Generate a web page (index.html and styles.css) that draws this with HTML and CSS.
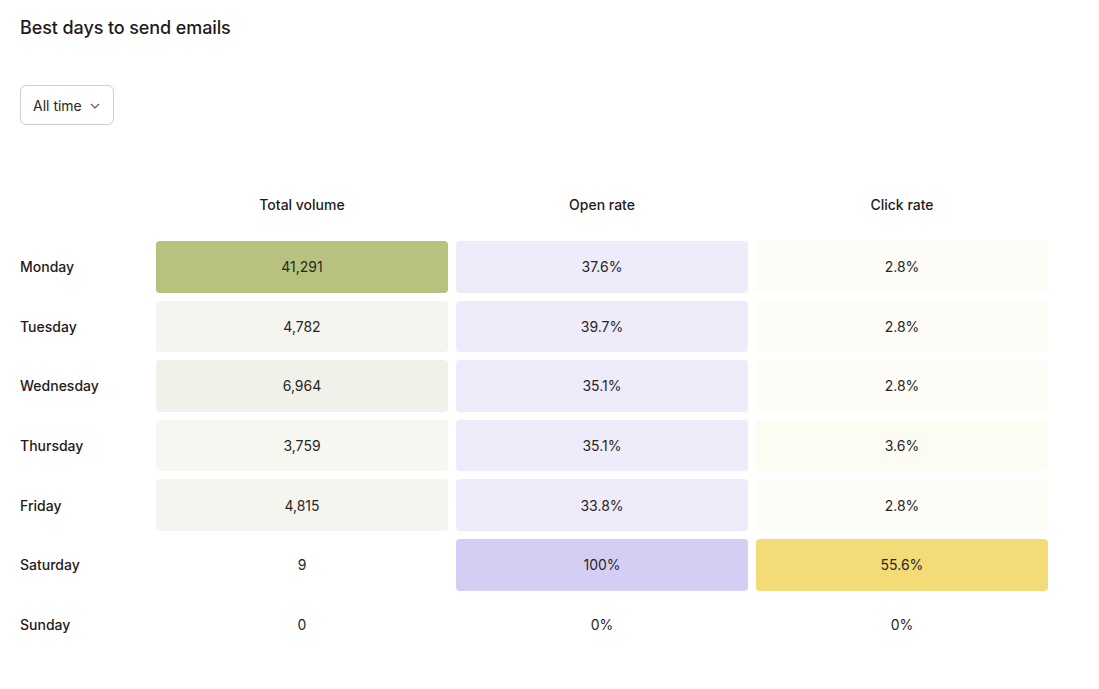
FILE: index.html
```html
<!DOCTYPE html>
<html>
<head>
<meta charset="utf-8">
<link rel="stylesheet" href="styles.css">
</head>
<body>
<div class="page">
  <h1 class="title">Best days to send emails</h1>
  <button class="select">All time
    <svg class="chev" width="10" height="6" viewBox="0 0 10 6"><path d="M1 1l4 4 4-4" fill="none" stroke="#555" stroke-width="1.1"/></svg>
  </button>
  <div class="grid">
    <div></div>
    <div class="head">Total volume</div>
    <div class="head">Open rate</div>
    <div class="head">Click rate</div>

    <div class="day">Monday</div>
    <div class="cell v-max">41,291</div>
    <div class="cell o-low">37.6%</div>
    <div class="cell c-low">2.8%</div>

    <div class="day">Tuesday</div>
    <div class="cell v-2">4,782</div>
    <div class="cell o-low">39.7%</div>
    <div class="cell c-low">2.8%</div>

    <div class="day">Wednesday</div>
    <div class="cell v-3">6,964</div>
    <div class="cell o-low">35.1%</div>
    <div class="cell c-low">2.8%</div>

    <div class="day">Thursday</div>
    <div class="cell v-1">3,759</div>
    <div class="cell o-low">35.1%</div>
    <div class="cell c-low2">3.6%</div>

    <div class="day">Friday</div>
    <div class="cell v-2">4,815</div>
    <div class="cell o-low">33.8%</div>
    <div class="cell c-low">2.8%</div>

    <div class="day">Saturday</div>
    <div class="cell">9</div>
    <div class="cell o-max">100%</div>
    <div class="cell c-max">55.6%</div>

    <div class="day">Sunday</div>
    <div class="cell">0</div>
    <div class="cell">0%</div>
    <div class="cell">0%</div>
  </div>
</div>
</body>
</html>
```
FILE: styles.css
```css
* { box-sizing: border-box; }
body {
  margin: 0;
  background: #fff;
  font-family: Inter, "Noto Sans", sans-serif;
  color: #1f1b1b;
}
.page {
  padding: 16px 20px 0 20px;
}
.title {
  margin: 0;
  font-size: 18px;
  line-height: 24px;
  font-weight: 500;
  letter-spacing: -0.1px;
}
.select {
  margin-top: 45px;
  height: 40px;
  width: 94px;
  display: flex;
  align-items: center;
  gap: 8px;
  padding: 0 12px;
  background: #fff;
  border: 1px solid #cfcfcf;
  border-radius: 6px;
  font-family: inherit;
  font-size: 14px;
  color: #2a2525;
}
.chev { margin-top: 1px; }
.grid {
  margin-top: 66px;
  display: grid;
  grid-template-columns: 128px 292px 292px 292px;
  grid-template-rows: 42px repeat(7, 51.6px);
  column-gap: 8px;
  row-gap: 8px;
}
.head {
  align-self: start;
  text-align: center;
  font-size: 14px;
  font-weight: 500;
  line-height: 28px;
  color: #1f1b1b;
}
.day {
  display: flex;
  align-items: center;
  font-size: 14px;
  font-weight: 500;
  color: #1f1b1b;
}
.cell {
  display: flex;
  align-items: center;
  justify-content: center;
  border-radius: 4px;
  font-size: 14px;
  color: #2a2525;
}
.v-max { background: #b7c27e; }
.v-1 { background: #f7f7f1; }
.v-2 { background: #f4f5ee; }
.v-3 { background: #f0f1e8; }
.o-low { background: #eeebfa; }
.o-max { background: #d5cef4; }
.c-low { background: #fdfcf6; }
.c-low2 { background: #fcfcf3; }
.c-max { background: #f3db77; }
```
